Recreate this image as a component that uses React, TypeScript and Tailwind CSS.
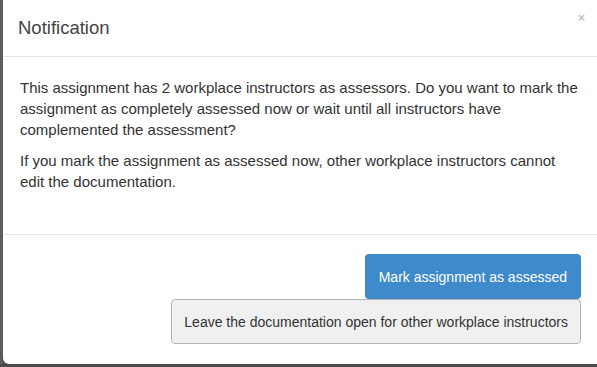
export default function App() {
  return (
    <div className="flex h-[367px] w-[597px] flex-col overflow-hidden bg-[#4a4a4a] font-['Liberation_Sans',Arial,sans-serif] text-[#333]">
      <div className="flex h-[364px]">
        <div className="w-[3px] bg-[#5c5c5c]" />
        <div className="flex w-[594px] flex-col rounded-bl-[6px] bg-white">
          <div className="flex h-[57px] items-start justify-between border-b border-[#e5e5e5] pl-[15px] pr-[12px]">
            <h4 className="pt-[17px] text-[18.5px] leading-[22px] text-[#444]">Notification</h4>
            <button className="pt-[11px] text-[12px] font-bold leading-[14px] text-[#c4c4c4]">×</button>
          </div>
          <div className="h-[178px] border-b border-[#e5e5e5] pl-[17px] pr-[14px] pt-[20px] text-[15px] leading-[21px]">
            <p className="mb-[10px]">
              This assignment has 2 workplace instructors as assessors. Do you want to mark the assignment as
              completely assessed now or wait until all instructors have complemented the assessment?
            </p>
            <p>
              If you mark the assignment as assessed now, other workplace instructors cannot edit the
              documentation.
            </p>
          </div>
          <div className="flex flex-col items-end pr-[16px] pt-[19px] text-[14px] leading-[20px]">
            <button className="h-[45px] rounded-[4px] bg-[#3f8acb] px-[14px] text-white">
              Mark assignment as assessed
            </button>
            <button className="h-[45px] rounded-[4px] border border-[#b3b3b3] bg-[#f0f0f0] px-[12px] text-[#333]">
              Leave the documentation open for other workplace instructors
            </button>
          </div>
        </div>
      </div>
    </div>
  );
}
